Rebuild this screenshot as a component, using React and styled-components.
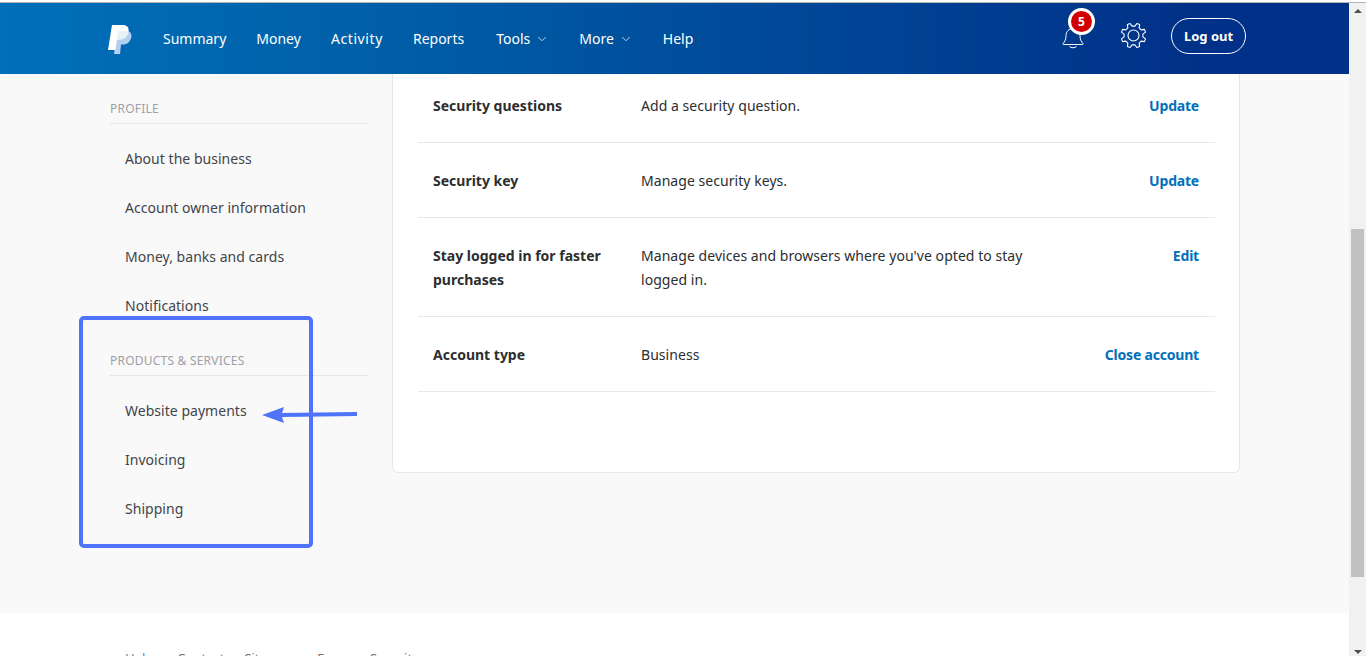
import React from "react";
import styled, { createGlobalStyle } from "styled-components";
import { ChevronDown } from "lucide-react";

const Global = createGlobalStyle`
  html, body { margin: 0; padding: 0; height: 656px; overflow: hidden; background: #fff; }
  body { font-family: "Noto Sans", "Open Sans", sans-serif; }
  * { box-sizing: border-box; }
`;

const Frame = styled.div`
  position: relative;
  display: flex;
  flex-direction: column;
  width: 1366px;
  height: 656px;
  overflow: hidden;
`;
const TopEdge = styled.div`
  height: 3px;
  flex: none;
  background: #fff;
  border-bottom: 1px solid #b5b5b5;
`;
const Window = styled.div`
  flex: 1;
  min-height: 0;
  display: flex;
`;
const Page = styled.div`
  flex: 1;
  min-width: 0;
  display: flex;
  flex-direction: column;
`;
const Header = styled.header`
  height: 71px;
  flex: none;
  display: flex;
  align-items: center;
  padding: 0 103px 0 107px;
  background: linear-gradient(90deg, #0070ba 0%, #005ea6 30%, #003087 90%, #003087 100%);
  color: #fff;
`;
const Logo = styled.svg`
  width: 25px;
  height: 30px;
  margin-top: 2px;
  flex: none;
`;
const Nav = styled.nav`
  display: flex;
  align-items: center;
  gap: 30px;
  margin-left: 31px;
  margin-top: 1px;
  flex: 1;
`;
const NavItem = styled.a`
  display: flex;
  align-items: center;
  gap: 5px;
  font-size: 14px;
  line-height: 20px;
  color: #fff;
  letter-spacing: ${(p) => p.$track || 0}px;
  margin-left: ${(p) => p.$push || 0}px;
`;
const HeadRight = styled.div`
  display: flex;
  align-items: center;
  margin-top: -5px;
`;
const BellWrap = styled.div`
  position: relative;
  width: 22px;
  height: 26px;
  margin: -1px 36px 0 0;
`;
const Badge = styled.span`
  position: absolute;
  top: -15px;
  left: 6px;
  width: 27px;
  height: 27px;
  border-radius: 50%;
  background: #d20000;
  border: 3px solid #fff;
  color: #fff;
  font-size: 12px;
  font-weight: 700;
  display: flex;
  align-items: center;
  justify-content: center;
`;
const Gear = styled.svg`
  width: 27px;
  height: 27px;
  margin: -1px 24px 0 0;
`;
const LogOut = styled.button`
  width: 75px;
  height: 36px;
  border: 1px solid #fff;
  border-radius: 18px;
  background: transparent;
  color: #fff;
  font: 700 13px "Noto Sans", sans-serif;
  padding: 0;
`;
const Content = styled.main`
  flex: 1;
  min-height: 0;
  display: flex;
  background: #f9f9f9;
  padding-left: 110px;
`;
const Side = styled.aside`
  width: 258px;
  flex: none;
  padding-top: 25px;
`;
const SideLabel = styled.div`
  font-size: 12px;
  letter-spacing: 0.22px;
  line-height: 20px;
  padding-bottom: 4px;
  border-bottom: 1px solid #e6e6e6;
  color: #a0a0a8;
  margin-top: ${(p) => (p.$gap ? "21px" : "0")};
`;
const SideList = styled.ul`
  list-style: none;
  margin: 0;
  padding: 10px 0 0 15px;
`;
const SideItem = styled.li`
  font-size: 14px;
  letter-spacing: 0.03px;
  line-height: 49px;
  height: 49px;
  color: #41454a;
`;
const Panel = styled.section`
  width: 848px;
  height: 399px;
  margin-left: 24px;
  padding: 0 24px 0 25px;
  background: #fff;
  border: 1px solid #e8e8e8;
  border-top: 0;
  border-radius: 0 0 6px 6px;
`;
const Row = styled.div`
  display: grid;
  grid-template-columns: 208px 400px 1fr;
  padding: ${(p) => (p.$first ? "20px" : "26px")} 16px 24px 15px;
  border-bottom: 1px solid #e8e8e8;
  font-size: 14px;
  line-height: 24px;
  color: #2c2e2f;
`;
const RowLabel = styled.div`
  font-weight: 700;
`;
const RowText = styled.div`
  letter-spacing: 0.05px;
`;
const RowAction = styled.a`
  text-align: right;
  font-weight: 700;
  letter-spacing: -0.2px;
  color: #0070ba;
`;
const Footer = styled.footer`
  height: 43px;
  flex: none;
  background: #fff;
  overflow: hidden;
  padding: 35px 0 0 125px;
  display: flex;
  font-size: 13px;
  line-height: 20px;
  color: #6c7378;
`;
const FootLink = styled.a`
  margin-right: ${(p) => p.$gap}px;
  color: ${(p) => p.$tint || "#6c7378"};
`;
const Scrollbar = styled.div`
  width: 17px;
  flex: none;
  position: relative;
  background: #f1f1f1;
  display: flex;
  flex-direction: column;
  align-items: center;
  justify-content: space-between;
  padding: 6px 0 2px;
`;
const Thumb = styled.div`
  position: absolute;
  left: 2px;
  top: 226px;
  width: 13px;
  height: 348px;
  background: #c1c1c1;
`;
const ArrowUp = styled.div`
  width: 0;
  height: 0;
  border: 4px solid transparent;
  border-top: 0;
  border-bottom: 4px solid #505050;
`;
const ArrowDown = styled.div`
  width: 0;
  height: 0;
  border: 4px solid transparent;
  border-bottom: 0;
  border-top: 4px solid #505050;
`;
const Callout = styled.div`
  position: absolute;
  left: 79px;
  top: 316px;
  width: 234px;
  height: 232px;
  border: 4px solid #4f74fa;
  border-radius: 5px;
  pointer-events: none;
`;
const CalloutArrow = styled.svg`
  position: absolute;
  left: 258px;
  top: 402px;
  width: 104px;
  height: 26px;
`;

const Chev = styled(ChevronDown)`
  width: 14px;
  height: 14px;
  stroke-width: 1.4;
  opacity: 0.9;
`;

function gearPath() {
  const c = 13.500;
  const out = 12.500;
  const inn = 9.500;
  const n = 8;
  const pts = [];
  for (let i = 0; i < n; i++) {
    const a = (i / n) * Math.PI * 2 + Math.PI / 8;
    const s = Math.PI / n;
    [[-0.62, inn], [-0.3, out], [0.3, out], [0.62, inn]].forEach(([k, r]) => {
      pts.push([c + r * Math.cos(a + k * s), c + r * Math.sin(a + k * s)]);
    });
  }
  return "M" + pts.map((p) => p[0].toFixed(2) + " " + p[1].toFixed(2)).join("L") + "Z";
}

const nav = [
  { t: "Summary" },
  { t: "Money" },
  { t: "Activity", track: 0.6 },
  { t: "Reports" },
  { t: "Tools", chev: true, push: 2 },
  { t: "More", chev: true },
  { t: "Help" },
];
const profile = ["About the business", "Account owner information", "Money, banks and cards", "Notifications"];
const products = ["Website payments", "Invoicing", "Shipping"];
const rows = [
  ["Security questions", "Add a security question.", "Update"],
  ["Security key", "Manage security keys.", "Update"],
  ["Stay logged in for faster purchases", "Manage devices and browsers where you've opted to stay logged in.", "Edit"],
  ["Account type", "Business", "Close account"],
];

export default function App() {
  return (
    <Frame>
      <Global />
      <TopEdge />
      <Window>
        <Page>
          <Header>
            <Logo viewBox="0 0 25 30">
              <path fill="#b3cff0" d="M10 6h10c3 0 4.800 2.500 4.400 5.500-.6 4.700-3.800 8-8 8h-2.400L13 29H7z" />
              <path fill="#fff" d="M5 0h10.500C20 0 22.300 2.300 21.500 6.500 20.600 11.500 17 14.500 12.500 14.500H10L8.500 25H1z" />
              <path fill="#e6f3f2" d="M10 14.500h2.500C17 14.500 20.600 11.500 21.500 6.500L20 6H11z" />
            </Logo>
            <Nav>
              {nav.map((n) => (
                <NavItem key={n.t} $track={n.track} $push={n.push}>
                  {n.t}
                  {n.chev && <Chev />}
                </NavItem>
              ))}
            </Nav>
            <HeadRight>
              <BellWrap>
                <svg width="22" height="26" viewBox="0 0 22 26" fill="none" stroke="#fff" strokeWidth="1">
                  <path d="M1 20.500c2-2 3-4 3-8 0-4 3-7 7-7s7 3 7 7c0 4 1 6 3 8 .4.700 0 1-.6 1H1.600c-.6 0-1-.3-.6-1z" />
                  <path d="M7.500 23.500c1.500 1.700 5.500 1.700 7 0" />
                </svg>
                <Badge>5</Badge>
              </BellWrap>
              <Gear viewBox="0 0 27 27" fill="none" stroke="#fff" strokeWidth="1.1" strokeLinejoin="round">
                <path d={gearPath()} />
                <circle cx="13.500" cy="13.500" r="5.500" />
              </Gear>
              <LogOut>Log out</LogOut>
            </HeadRight>
          </Header>
          <Content>
            <Side>
              <SideLabel>PROFILE</SideLabel>
              <SideList>
                {profile.map((t) => (
                  <SideItem key={t}>{t}</SideItem>
                ))}
              </SideList>
              <SideLabel $gap>PRODUCTS &amp; SERVICES</SideLabel>
              <SideList>
                {products.map((t) => (
                  <SideItem key={t}>{t}</SideItem>
                ))}
              </SideList>
            </Side>
            <Panel>
              {rows.map(([a, b, c], i) => (
                <Row key={a} $first={i === 0}>
                  <RowLabel>{a}</RowLabel>
                  <RowText>{b}</RowText>
                  <RowAction>{c}</RowAction>
                </Row>
              ))}
            </Panel>
          </Content>
          <Footer>
            <FootLink $gap={24} $tint="#4a90a8">Help</FootLink>
            <FootLink $gap={20}>Contact</FootLink>
            <FootLink $gap={23}>Sitemap</FootLink>
            <FootLink $gap={25}>Fees</FootLink>
            <FootLink $gap={22}>Security</FootLink>
          </Footer>
        </Page>
        <Scrollbar>
          <ArrowUp />
          <Thumb />
          <ArrowDown />
        </Scrollbar>
      </Window>
      <Callout />
      <CalloutArrow viewBox="0 0 104 26">
        <path d="M4 13 L26 5 L24 11 L99 10 L99 14 L24 15 L26 21 Z" fill="#4f74fa" />
      </CalloutArrow>
    </Frame>
  );
}
